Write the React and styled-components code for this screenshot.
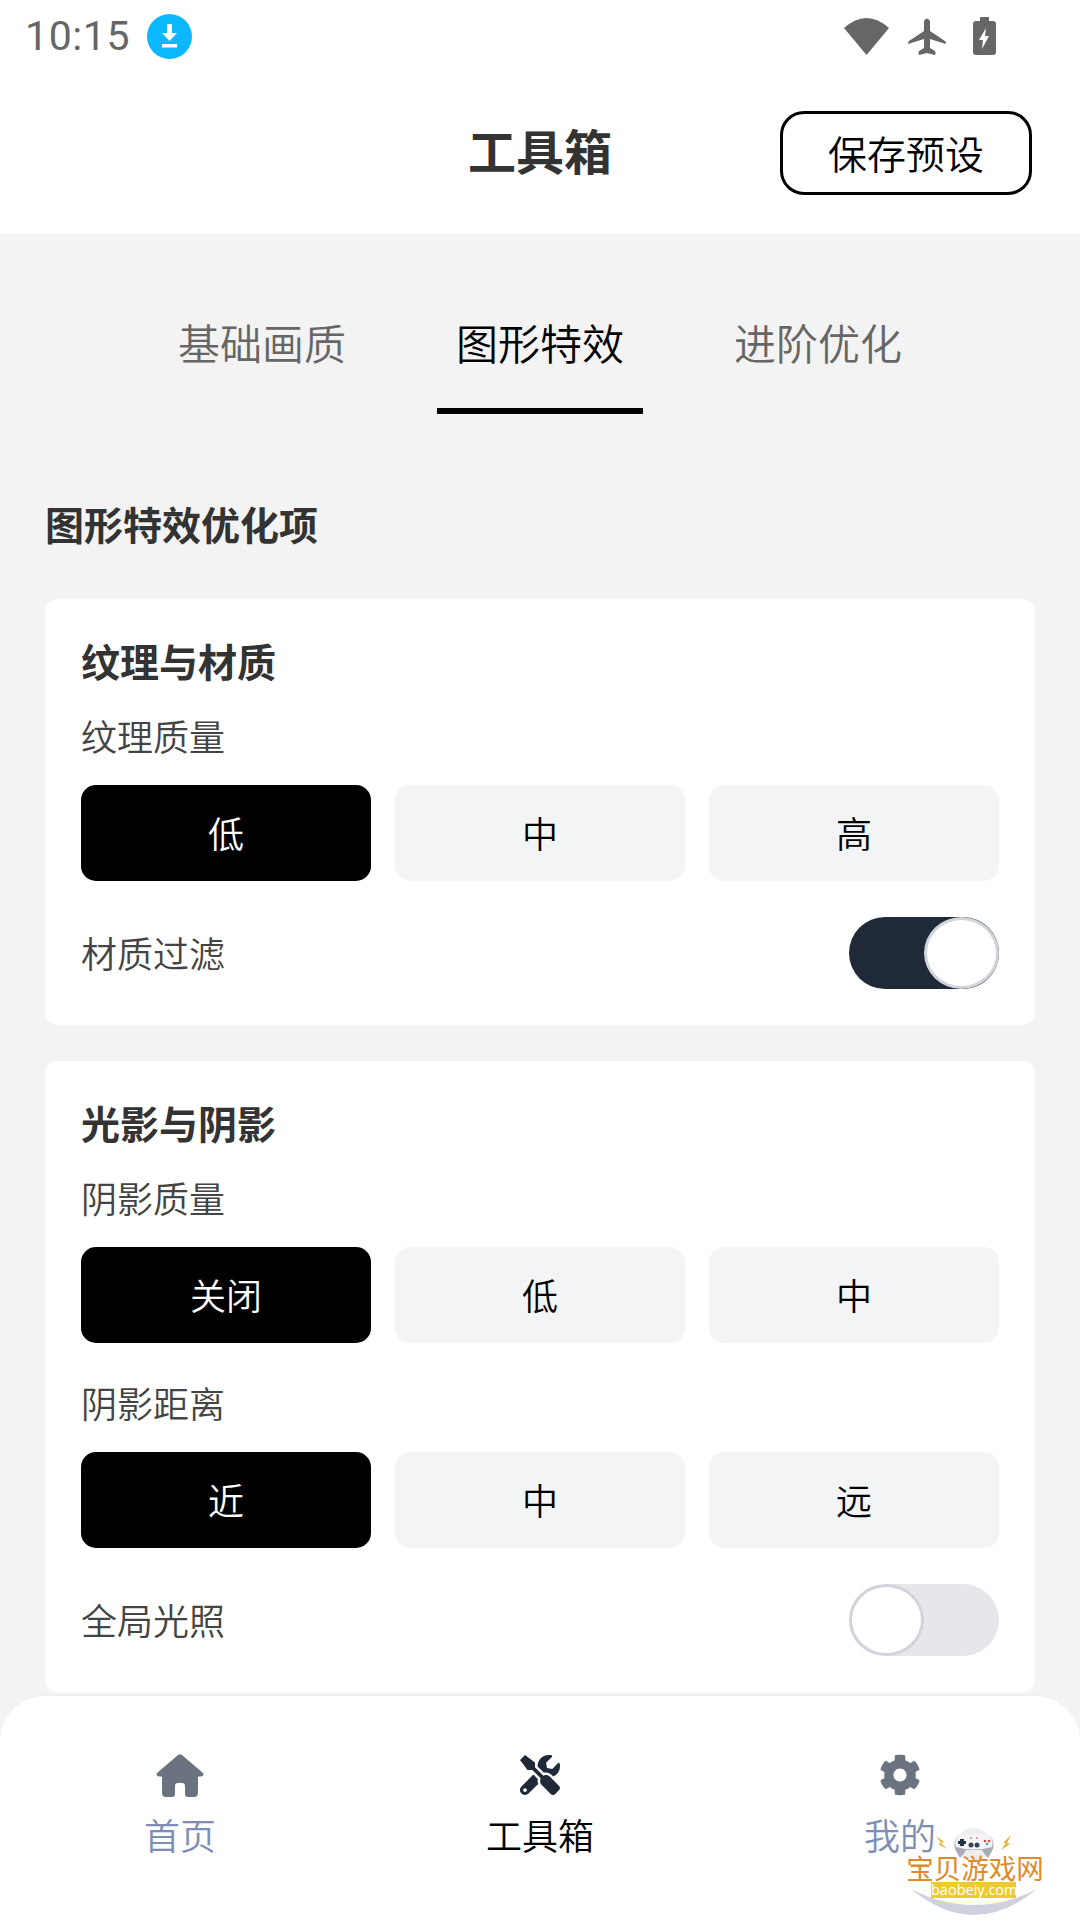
import React from 'react';
import styled, { createGlobalStyle } from 'styled-components';
import { FaTools, FaCog } from 'react-icons/fa';

const GlobalStyle = createGlobalStyle`
    html, body {
        margin: 0;
        padding: 0;
        background: #f3f3f4;
    }
    * {
        box-sizing: border-box;
    }
`;

const Page = styled.div`
    position: relative;
    width: 1080px;
    height: 1920px;
    overflow: hidden;
    display: flex;
    flex-direction: column;
    background: #f3f3f4;
    font-family: "Noto Sans CJK SC", "Noto Sans", sans-serif;
`;

// 상단
const TopArea = styled.div`
    background: #ffffff;
    height: 234px;
    flex: none;
`;

const StatusBar = styled.div`
    height: 72px;
    padding: 0 84px 0 25px;
    display: flex;
    align-items: center;
    justify-content: space-between;
`;

const StatusLeft = styled.div`
    display: flex;
    align-items: center;
    gap: 17px;
`;

const Time = styled.span`
    font-family: Roboto, sans-serif;
    font-size: 41px;
    letter-spacing: 0.6px;
    color: #666666;
`;

const StatusRight = styled.div`
    display: flex;
    align-items: center;
    gap: 19px;
`;

const BatteryWrap = styled.div`
    display: flex;
    margin-left: 8px;
`;

const Header = styled.div`
    position: relative;
    height: 162px;
    padding: 39px 48px 0 0;
    display: flex;
    justify-content: flex-end;
    align-items: flex-start;
`;

const Title = styled.div`
    position: absolute;
    left: 0;
    right: 0;
    top: 47px;
    text-align: center;
    font-size: 48px;
    line-height: 60px;
    font-weight: 700;
    color: #333333;
`;

const SaveButton = styled.div`
    width: 252px;
    height: 84px;
    border: 3px solid #000000;
    border-radius: 24px;
    padding-bottom: 3px;
    display: flex;
    align-items: center;
    justify-content: center;
    font-size: 39px;
    font-weight: 350;
    color: #000000;
`;

const Tabs = styled.div`
    flex: none;
    height: 180px;
    padding-top: 66px;
    display: flex;
    justify-content: center;
    gap: 72px;
`;

const Tab = styled.div`
    width: 206px;
    height: 114px;
    padding-bottom: 26px;
    display: flex;
    align-items: center;
    justify-content: center;
    font-size: 42px;
    font-weight: 350;
    color: ${p => (p.$active ? '#000000' : '#666666')};
    border-bottom: 6px solid ${p => (p.$active ? '#000000' : 'transparent')};
`;

const Content = styled.div`
    flex: 1;
    padding: 0 45px;
    display: flex;
    flex-direction: column;
    gap: 36px;
`;

const SectionTitle = styled.div`
    height: 56px;
    margin: 81px 0 12px;
    font-size: 39px;
    line-height: 56px;
    font-weight: 700;
    color: #333333;
`;

const Card = styled.div`
    background: #ffffff;
    border-radius: 12px;
    padding: 34px 36px 36px;
    display: flex;
    flex-direction: column;
`;

const CardTitle = styled.div`
    font-size: 39px;
    line-height: 54px;
    font-weight: 700;
    color: #333333;
`;

const Label = styled.div`
    font-size: 36px;
    line-height: 50px;
    font-weight: 350;
    color: #444444;
    margin-top: ${p => (p.$first ? 23 : 34)}px;
`;

const Segments = styled.div`
    display: grid;
    grid-template-columns: repeat(3, 290px);
    gap: 24px;
    margin-top: 25px;
`;

const Segment = styled.div`
    height: 96px;
    border-radius: 15px;
    padding-bottom: 3px;
    display: flex;
    align-items: center;
    justify-content: center;
    font-size: 36px;
    font-weight: 350;
    background: ${p => (p.$active ? '#000000' : '#f3f4f6')};
    color: ${p => (p.$active ? '#ffffff' : '#000000')};
`;

const SwitchRow = styled.div`
    display: flex;
    align-items: center;
    justify-content: space-between;
    margin-top: 36px;
    height: 72px;
`;

const SwitchLabel = styled.div`
    font-size: 36px;
    font-weight: 350;
    padding-bottom: 3px;
    color: #444444;
`;

const Track = styled.div`
    width: 150px;
    height: 72px;
    border-radius: 36px;
    display: flex;
    justify-content: ${p => (p.$on ? 'flex-end' : 'flex-start')};
    background: ${p => (p.$on ? '#1f2937' : '#e5e7eb')};
`;

const Knob = styled.div`
    width: 75px;
    height: 72px;
    border-radius: 50%;
    background: #ffffff;
    border: 3px solid #d1d5db;
`;

const BottomNav = styled.div`
    position: absolute;
    left: 0;
    right: 0;
    bottom: 0;
    height: 225px;
    background: #ffffff;
    border-top: 1px solid #eeeeee;
    border-radius: 45px 45px 0 0;
    display: grid;
    grid-template-columns: 360px 360px 360px;
    padding-top: 57px;
`;

const NavItem = styled.div`
    display: flex;
    flex-direction: column;
    align-items: center;
    color: ${p => (p.$active ? '#1f2937' : '#6b7280')};
`;

const NavIcon = styled.div`
    height: 44px;
    display: flex;
    align-items: center;
    justify-content: center;
`;

const NavLabel = styled.div`
    margin-top: 10px;
    font-size: 36px;
    line-height: 54px;
    font-weight: 350;
    color: ${p => (p.$active ? '#000000' : '#7d8db5')};
`;

// 워터마크
const Watermark = styled.div`
    position: absolute;
    left: 900px;
    top: 1822px;
    width: 150px;
    height: 98px;
`;

const WatermarkArt = styled.svg`
    position: absolute;
    left: 0;
    top: 0;
`;

const WatermarkName = styled.div`
    position: absolute;
    left: 0;
    top: 33px;
    width: 150px;
    height: 24px;
    text-align: center;
    font-size: 27.5px;
    line-height: 24px;
    color: #e08a28;
    white-space: nowrap;
`;

const WatermarkUrl = styled.div`
    position: absolute;
    left: 31px;
    top: 60px;
    width: 85px;
    height: 16px;
    background: #eccb30;
    color: #ffffff;
    font-family: "Open Sans", sans-serif;
    font-size: 14.5px;
    line-height: 16px;
    text-align: center;
`;

const WifiIcon = () => (
    <svg width="45" height="37" viewBox="0 0 45 37">
        <path d="M0 10 Q22.5 -10 45 10 L22.5 37 Z" fill="#666666" />
    </svg>
);

const PlaneIcon = () => (
    <svg width="38" height="37" viewBox="0 0 38 37">
        <path
            d="M16 3 Q19 -2 22 3 L22 13 L37 23 Q38 24 38 26 L22 21 L22 30 L27 33 Q28 35 27 37 L19 35 L11 37 Q10 35 11 33 L16 30 L16 21 L0 26 Q0 24 1 23 L16 13 Z"
            fill="#666666"
        />
    </svg>
);

const BatteryIcon = () => (
    <svg width="23" height="38" viewBox="0 0 23 38">
        <path
            d="M7 0 H16 V4 H20 Q23 4 23 7 V35 Q23 38 20 38 H3 Q0 38 0 35 V7 Q0 4 3 4 H7 Z"
            fill="#666666"
        />
        <path d="M13 11 L6 23 H10 L9 32 L16 19 H12 Z" fill="#ffffff" />
    </svg>
);

const DownloadBadge = () => (
    <svg width="45" height="45" viewBox="0 0 45 45">
        <circle cx="22.5" cy="22.5" r="22.5" fill="#0bb8fd" />
        <path d="M20 10 H25 V19 H30 L22.5 27 L15 19 H20 Z" fill="#ffffff" />
        <rect x="15" y="30" width="15" height="3.5" fill="#ffffff" />
    </svg>
);

const HouseIcon = () => (
    <svg width="48" height="43" viewBox="0 0 48 43" fill="currentColor">
        <path d="M22 1 Q24 -0.5 26 1 L47 19 Q48.500 22 45 22.500 L42 22.500 V39 Q42 43 38 43 L32 43 Q29 43 29 40 V32 Q29 29 26 29 H22 Q19 29 19 32 V40 Q19 43 16 43 L10 43 Q6 43 6 39 V22.500 L3 22.500 Q-0.500 22 1 19 Z" />
    </svg>
);

const options = [
    {
        title: '纹理与材质',
        groups: [{ label: '纹理质量', items: ['低', '中', '高'] }],
        switchLabel: '材质过滤',
        on: true,
    },
    {
        title: '光影与阴影',
        groups: [
            { label: '阴影质量', items: ['关闭', '低', '中'] },
            { label: '阴影距离', items: ['近', '中', '远'] },
        ],
        switchLabel: '全局光照',
        on: false,
    },
];

const App = () => (
    <Page>
        <GlobalStyle />
        <TopArea>
            <StatusBar>
                <StatusLeft>
                    <Time>10:15</Time>
                    <DownloadBadge />
                </StatusLeft>
                <StatusRight>
                    <WifiIcon />
                    <PlaneIcon />
                    <BatteryWrap><BatteryIcon /></BatteryWrap>
                </StatusRight>
            </StatusBar>
            <Header>
                <Title>工具箱</Title>
                <SaveButton>保存预设</SaveButton>
            </Header>
        </TopArea>
        <Tabs>
            <Tab>基础画质</Tab>
            <Tab $active>图形特效</Tab>
            <Tab>进阶优化</Tab>
        </Tabs>
        <Content>
            <SectionTitle>图形特效优化项</SectionTitle>
            {options.map(card => (
                <Card key={card.title}>
                    <CardTitle>{card.title}</CardTitle>
                    {card.groups.map((group, g) => (
                        <React.Fragment key={group.label}>
                            <Label $first={g === 0}>{group.label}</Label>
                            <Segments>
                                {group.items.map((item, i) => (
                                    <Segment key={item} $active={i === 0}>{item}</Segment>
                                ))}
                            </Segments>
                        </React.Fragment>
                    ))}
                    <SwitchRow>
                        <SwitchLabel>{card.switchLabel}</SwitchLabel>
                        <Track $on={card.on}><Knob /></Track>
                    </SwitchRow>
                </Card>
            ))}
        </Content>
        <BottomNav>
            <NavItem>
                <NavIcon><HouseIcon /></NavIcon>
                <NavLabel>首页</NavLabel>
            </NavItem>
            <NavItem $active>
                <NavIcon><FaTools size={40} /></NavIcon>
                <NavLabel $active>工具箱</NavLabel>
            </NavItem>
            <NavItem>
                <NavIcon><FaCog size={42} /></NavIcon>
                <NavLabel>我的</NavLabel>
            </NavItem>
        </BottomNav>
        <Watermark>
            <WatermarkArt width="150" height="98" viewBox="0 0 150 98">
                <path d="M11 67 Q74 99 137 67 Q74 119 11 67 Z" fill="#cfd2de" />
                <circle cx="73.5" cy="23" r="17" fill="#eeeeee" />
                <path d="M58 14 Q74 10 90 14 Q95 18 93 27 L88 36 Q84 32 82 28 H66 Q64 32 60 36 L55 27 Q53 18 58 14 Z" fill="#a9abb6" />
                <path d="M59 13 Q74 10 89 13 Q94 18 92 25 Q74 30 56 25 Q54 18 59 13 Z" fill="#f4f4f6" />
                <path d="M60 17 h4 v2 h2 v3 h-2 v2 h-4 v-2 h-2 v-3 h2 Z" fill="#223344" />
                <circle cx="71" cy="23" r="2.500" fill="#334455" />
                <circle cx="77" cy="23" r="2.500" fill="#334455" />
                <circle cx="85" cy="19" r="1.300" fill="#d94444" />
                <circle cx="89" cy="19" r="1.300" fill="#d94444" />
                <circle cx="87" cy="22" r="1.300" fill="#33aacc" />
                <circle cx="71" cy="16" r="1" fill="#d98888" />
                <circle cx="77" cy="16" r="1" fill="#d98888" />
                <path d="M36 14 L44 20 L41 21 L47 27 L38 22 L41 21 Z" fill="#e8b030" />
                <path d="M111 13 L103 21 L106 21 L101 28 L110 22 L107 21 Z" fill="#e8b030" />
            </WatermarkArt>
            <WatermarkName>宝贝游戏网</WatermarkName>
            <WatermarkUrl>baobeiy.com</WatermarkUrl>
        </Watermark>
    </Page>
);

export default App;
